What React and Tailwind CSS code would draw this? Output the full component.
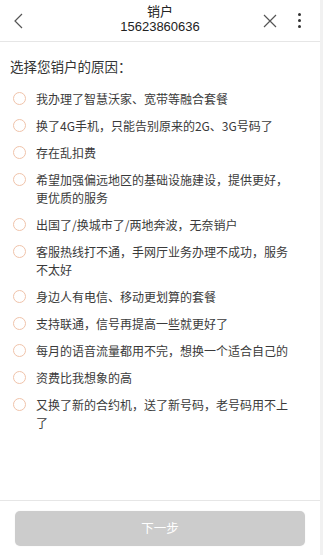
import React, { useState } from 'react';

const reasons = [
  '我办理了智慧沃家、宽带等融合套餐',
  '换了4G手机，只能告别原来的2G、3G号码了',
  '存在乱扣费',
  '希望加强偏远地区的基础设施建设，提供更好，更优质的服务',
  '出国了/换城市了/两地奔波，无奈销户',
  '客服热线打不通，手网厅业务办理不成功，服务不太好',
  '身边人有电信、移动更划算的套餐',
  '支持联通，信号再提高一些就更好了',
  '每月的语音流量都用不完，想换一个适合自己的',
  '资费比我想象的高',
  '又换了新的合约机，送了新号码，老号码用不上了',
];

const App = () => {
  const [picked, setPicked] = useState(null);

  return (
    <div
      className="flex h-[555px] w-[323px] bg-white text-[#333]"
      style={{ fontFamily: '"Noto Sans CJK SC", "Noto Sans", sans-serif' }}
    >
      <div className="flex w-[320px] flex-col">
        {/* header */}
        <div className="relative flex h-[42px] shrink-0 items-center justify-center border-b border-[#e6e6e6]">
          <button className="absolute left-[12px] top-[11px] text-[#555]">
            <svg width="14" height="20" viewBox="0 0 14 20" fill="none" stroke="currentColor" strokeWidth="1.2">
              <path d="M10 3 L3 10 L10 17" />
            </svg>
          </button>
          <div className="flex flex-col items-center pb-[3px]">
            <span className="text-[13px] leading-[16px] text-[#222]">销户</span>
            <span className="font-['Liberation_Sans',sans-serif] text-[13px] leading-[16px] text-[#222]">15623860636</span>
          </div>
          <button className="absolute left-[262px] top-[13px] text-[#555]">
            <svg width="16" height="16" viewBox="0 0 16 16" fill="none" stroke="currentColor" strokeWidth="1.2">
              <path d="M2 2 L14 14 M14 2 L2 14" />
            </svg>
          </button>
          <div className="absolute left-[298px] top-[13px] flex flex-col gap-[3px]">
            <span className="h-[3px] w-[3px] rounded-full bg-[#333]" />
            <span className="h-[3px] w-[3px] rounded-full bg-[#333]" />
            <span className="h-[3px] w-[3px] rounded-full bg-[#333]" />
          </div>
        </div>

        {/* content */}
        <div className="flex-1 pt-[14px]">
          <p className="px-[10px] text-[13.5px] leading-[20px] text-[#333]">选择您销户的原因：</p>
          <ul className="mt-[14px] flex flex-col gap-[9px]">
            {reasons.map((r, i) => (
              <li
                key={i}
                className="flex cursor-pointer items-start pl-[13px]"
                onClick={() => setPicked(i)}
              >
                <span
                  className={`mt-[2px] h-[13px] w-[13px] shrink-0 rounded-full border ${
                    picked === i ? 'border-[#f26b1d] bg-[#f26b1d]' : 'border-[#f0c3aa]'
                  }`}
                />
                <span className="ml-[10px] w-[258px] text-[12px] leading-[18px] text-[#3a3a3a]">{r}</span>
              </li>
            ))}
          </ul>
        </div>

        {/* footer */}
        <div className="shrink-0 border-t border-[#e6e6e6] px-[15px] pb-[9px] pt-[10px]">
          <button
            disabled={picked === null}
            className="flex h-[35px] w-full items-center justify-center rounded-[5px] bg-[#cccccc] text-[12.5px] text-white shadow-[0_0_2px_rgba(0,0,0,0.06)]"
          >
            下一步
          </button>
        </div>
      </div>
      <div className="w-[3px] bg-[#f1f1f1]" />
    </div>
  );
};

export default App;
